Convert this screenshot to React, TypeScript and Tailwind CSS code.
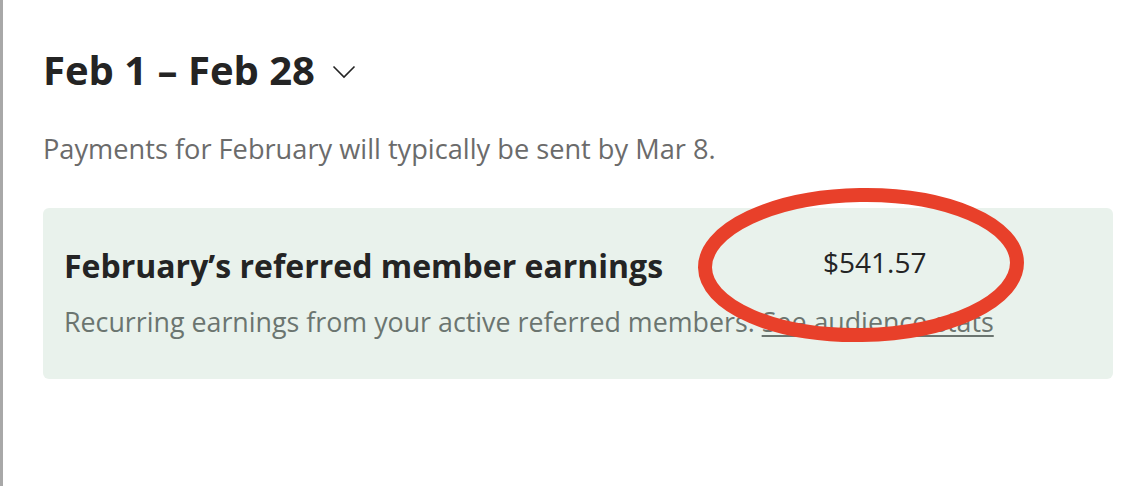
export default function App() {
    return (
        <div className="relative w-[1140px] h-[486px] bg-white border-l-[3px] border-[#a8a8a8] overflow-hidden" style={{ fontFamily: '"Open Sans", Lato, sans-serif' }}>
            <div className="pl-[40px] pr-[27px] pt-[46px]">
                {/* period picker */}
                <div className="flex items-center gap-[17px]">
                    <h1 className="text-[40px] leading-[48px] font-bold text-[#242424]">Feb 1 – Feb 28</h1>
                    <svg width="24" height="14" viewBox="0 0 24 14" className="mt-[4px]" aria-hidden>
                        <path d="M1.5 1.5 L12 12 L22.5 1.5" fill="none" stroke="#242424" strokeWidth="1.6" />
                    </svg>
                </div>

                <p className="mt-[37px] text-[27.2px] leading-[36px] text-[#6b6b6b]">Payments for February will typically be sent by Mar 8.</p>

                {/* earnings card */}
                <div className="mt-[41px] rounded-[6px] bg-[#e9f2ec] px-[21px] pt-[38px] pb-[40px]">
                    <div className="flex items-start">
                        <h2 className="w-[759px] text-[32px] leading-[40px] font-bold text-[#242424]">February’s referred member earnings</h2>
                        <span className="text-[28px] leading-[32px] text-[#242424]">$541.57</span>
                    </div>
                    <p className="mt-[19px] text-[26.8px] leading-[34px] text-[#6b7570]">
                        Recurring earnings from your active referred members. <a className="underline underline-offset-[3px] decoration-[1.5px]">See audience stats</a>
                    </p>
                </div>
            </div>

            {/* hand-drawn highlight */}
            <svg className="pointer-events-none absolute left-0 top-0" width="1140" height="486" aria-hidden>
                <ellipse cx="858" cy="265" rx="156" ry="70" fill="none" stroke="#e8402a" strokeWidth="14" transform="rotate(-1 858 265)" />
            </svg>
        </div>
    );
}
